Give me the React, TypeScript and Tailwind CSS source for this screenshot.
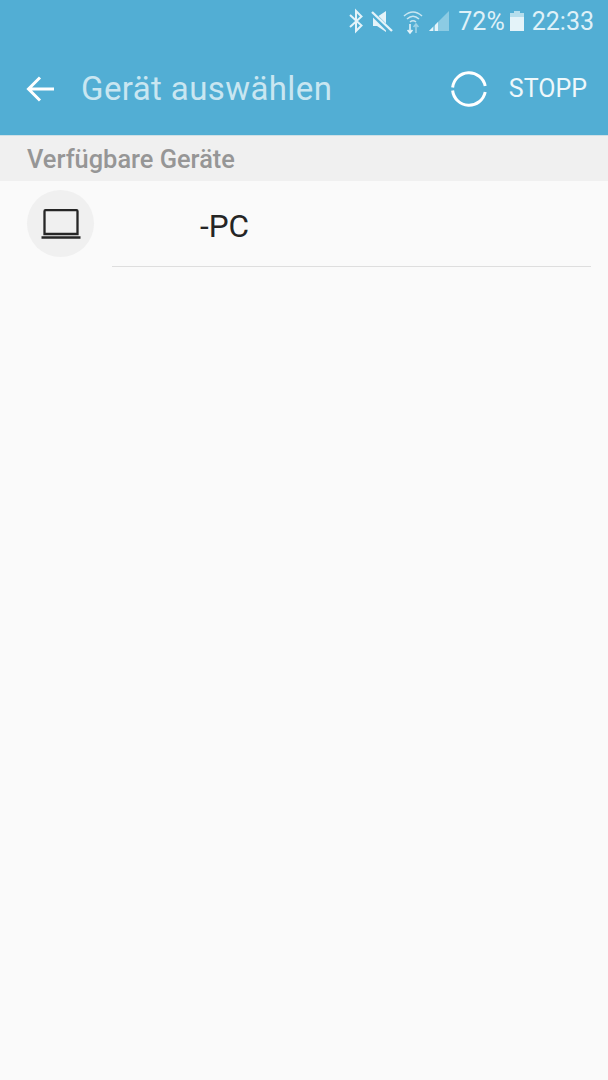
import React from "react";

const StatusIcons = () => (
  <svg width="84" height="32" viewBox="0 0 84 32" className="shrink-0">
    {/* bluetooth */}
    <path d="M2 10 L13.5 20.5 L8 26 V6 L13.5 11.5 L2 22" fill="none" stroke="#e4f3f9" strokeWidth="2" />
    {/* mute */}
    <path d="M25 12h4l9-6v21l-9-6h-4z" fill="#e4f3f9" />
    <path d="M23 7 L44 28" stroke="#52aed4" strokeWidth="5" />
    <path d="M24 7 L44 26" stroke="#e4f3f9" strokeWidth="2.4" />
    {/* wifi */}
    <path d="M56 11 Q65 3 74 11" fill="none" stroke="#c9e6f1" strokeWidth="1.6" />
    <path d="M59 14 Q65 8.5 71 14" fill="none" stroke="#c9e6f1" strokeWidth="1.6" />
    <path d="M62 17 Q65 14.5 68 17" fill="none" stroke="#c9e6f1" strokeWidth="1.6" />
    <path d="M62 19v9M59.6 25l2.4 3 2.4-3" fill="none" stroke="#e4f3f9" strokeWidth="1.6" />
    <path d="M68 28v-9M65.6 22l2.4-3 2.4 3" fill="none" stroke="#9dd2e6" strokeWidth="1.6" />
  </svg>
);

const Signal = () => (
  <svg width="20" height="20" viewBox="0 0 20 20" className="shrink-0">
    <path d="M0 20 L20 0 V20 Z" fill="#8ccbe3" />
    <path d="M0 20 L4 16 V20 Z M6 20 V14 L9 11 V20 Z" fill="#e4f3f9" />
  </svg>
);

const Battery = () => (
  <svg width="14" height="20" viewBox="0 0 14 20" className="shrink-0">
    <path d="M4 0h6v2H4z" fill="#b5deed" />
    <path d="M0 2h14v18H0z" fill="#b5deed" />
    <path d="M0 6h14v14H0z" fill="#e4f3f9" />
  </svg>
);

const App: React.FC = () => {
  return (
    <div className="w-[608px] h-[1080px] bg-[#fafafa] flex flex-col font-['Roboto',sans-serif] overflow-hidden">
      {/* Statusleiste + Toolbar */}
      <div className="h-[136px] bg-[#52aed4] border-b border-[#cfe0e6] flex flex-col shrink-0">
        <div className="h-[40px] pt-[2px] flex items-center justify-end pr-[14px] text-[#dff1f8] text-[25px] leading-none">
          <div className="flex items-center">
            <StatusIcons />
            <span className="-ml-[3px]">
              <Signal />
            </span>
            <span className="ml-[9px]">72%</span>
            <span className="ml-[5px]">
              <Battery />
            </span>
            <span className="ml-[8px]">22:33</span>
          </div>
        </div>
        <div className="flex-1 flex items-center pt-[2px]">
          <svg width="30" height="28" viewBox="0 0 30 28" fill="none" className="ml-[26px] shrink-0">
            <path d="M28 14H3M14 2.5 2.5 14 14 25.5" stroke="#fff" strokeWidth="3" />
          </svg>
          <span className="ml-[25px] text-[33px] text-[#c9e6f1] leading-none tracking-[0.4px]">Gerät auswählen</span>
          <svg width="38" height="38" viewBox="0 0 38 38" fill="none" className="ml-auto shrink-0">
            <path d="M2.62 17.5A16.5 16.5 0 0 1 35.2 16M35.2 22A16.5 16.5 0 0 1 2.62 20.5" stroke="#fff" strokeWidth="3" />
          </svg>
          <span className="ml-[21px] mr-[21px] text-[25px] text-[#eef8fb] leading-none">STOPP</span>
        </div>
      </div>

      {/* Abschnittstitel */}
      <div className="h-[45px] bg-[#f0f0f0] flex items-center pl-[27px] pt-[3px] shrink-0">
        <span className="text-[25.4px] font-medium text-[#969696] leading-none">Verfügbare Geräte</span>
      </div>

      {/* Geräteliste */}
      <div className="flex pl-[27px] pr-[17px]">
        <div className="w-[67px] h-[67px] mt-[9px] rounded-full bg-[#f0f0f0] flex items-center justify-center shrink-0">
          <svg width="40" height="30" viewBox="0 0 40 30" fill="none">
            <path d="M3.5 25V2.2a1 1 0 0 1 1-1h31a1 1 0 0 1 1 1V25H3.5z" stroke="#262626" strokeWidth="2.3" />
            <path d="M0.5 28.5h39" stroke="#262626" strokeWidth="2.6" />
          </svg>
        </div>
        <div className="flex-1 ml-[18px] h-[86px] border-b border-[#dedede] flex items-center pl-[88px] pt-[6px]">
          <span className="text-[31.5px] text-[#252525] leading-none">-PC</span>
        </div>
      </div>
    </div>
  );
};

export default App;
